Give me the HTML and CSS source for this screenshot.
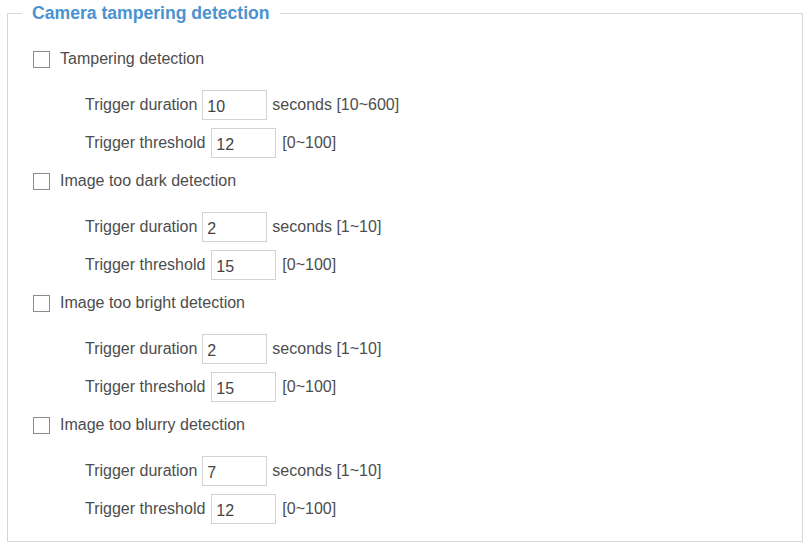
FILE: index.html
```html
<!DOCTYPE html>
<html lang="en">
<head>
  <meta charset="UTF-8">
  <title>Camera tampering detection</title>
  <link rel="stylesheet" href="styles.css">
</head>
<body>
  <fieldset class="panel">
    <legend>Camera tampering detection</legend>

    <div class="section">
      <label class="check-row"><input type="checkbox" id="tamper"> Tampering detection</label>
      <div class="params">
        <div class="row"><span>Trigger duration</span><input type="text" class="num" value="10"><span>seconds [10~600]</span></div>
        <div class="row threshold"><span>Trigger threshold</span><input type="text" class="num" value="12"><span>[0~100]</span></div>
      </div>
    </div>

    <div class="section">
      <label class="check-row"><input type="checkbox" id="dark"> Image too dark detection</label>
      <div class="params">
        <div class="row"><span>Trigger duration</span><input type="text" class="num" value="2"><span>seconds [1~10]</span></div>
        <div class="row threshold"><span>Trigger threshold</span><input type="text" class="num" value="15"><span>[0~100]</span></div>
      </div>
    </div>

    <div class="section">
      <label class="check-row"><input type="checkbox" id="bright"> Image too bright detection</label>
      <div class="params">
        <div class="row"><span>Trigger duration</span><input type="text" class="num" value="2"><span>seconds [1~10]</span></div>
        <div class="row threshold"><span>Trigger threshold</span><input type="text" class="num" value="15"><span>[0~100]</span></div>
      </div>
    </div>

    <div class="section">
      <label class="check-row"><input type="checkbox" id="blurry"> Image too blurry detection</label>
      <div class="params">
        <div class="row"><span>Trigger duration</span><input type="text" class="num" value="7"><span>seconds [1~10]</span></div>
        <div class="row threshold"><span>Trigger threshold</span><input type="text" class="num" value="12"><span>[0~100]</span></div>
      </div>
    </div>
  </fieldset>
</body>
</html>
```

FILE: styles.css
```css
body {
  margin: 0;
  background-color: #ffffff;
  font-family: 'Liberation Sans', Arial, sans-serif;
  font-size: 16px;
  color: #4d4d4d;
}

.panel {
  margin: 2px 6px 0 7px;
  padding: 16px 14px 13px 14px;
  border: 1px solid #d6d6d6;
  min-width: 0;
}

.panel legend {
  padding: 0 10px;
  font-size: 17.6px;
  line-height: 22px;
  font-weight: bold;
  color: #4a92d0;
}

.check-row {
  display: flex;
  align-items: center;
  height: 38px;
  padding-left: 11px;
}

.check-row input {
  appearance: none;
  width: 17px;
  height: 17px;
  margin: 0 10px 0 0;
  border: 1px solid #8c8c8c;
  background-color: #fff;
}

.params {
  margin-top: 8px;
  padding-left: 63px;
}

.row {
  display: flex;
  align-items: center;
  gap: 5px;
  height: 38px;
}

.row.threshold {
  gap: 6px;
}

.num {
  box-sizing: border-box;
  width: 65px;
  height: 30px;
  padding: 3px 4px 0 4px;
  border: 1px solid #d2d2d2;
  font-family: 'Liberation Sans', Arial, sans-serif;
  font-size: 16px;
  color: #444;
}
```
